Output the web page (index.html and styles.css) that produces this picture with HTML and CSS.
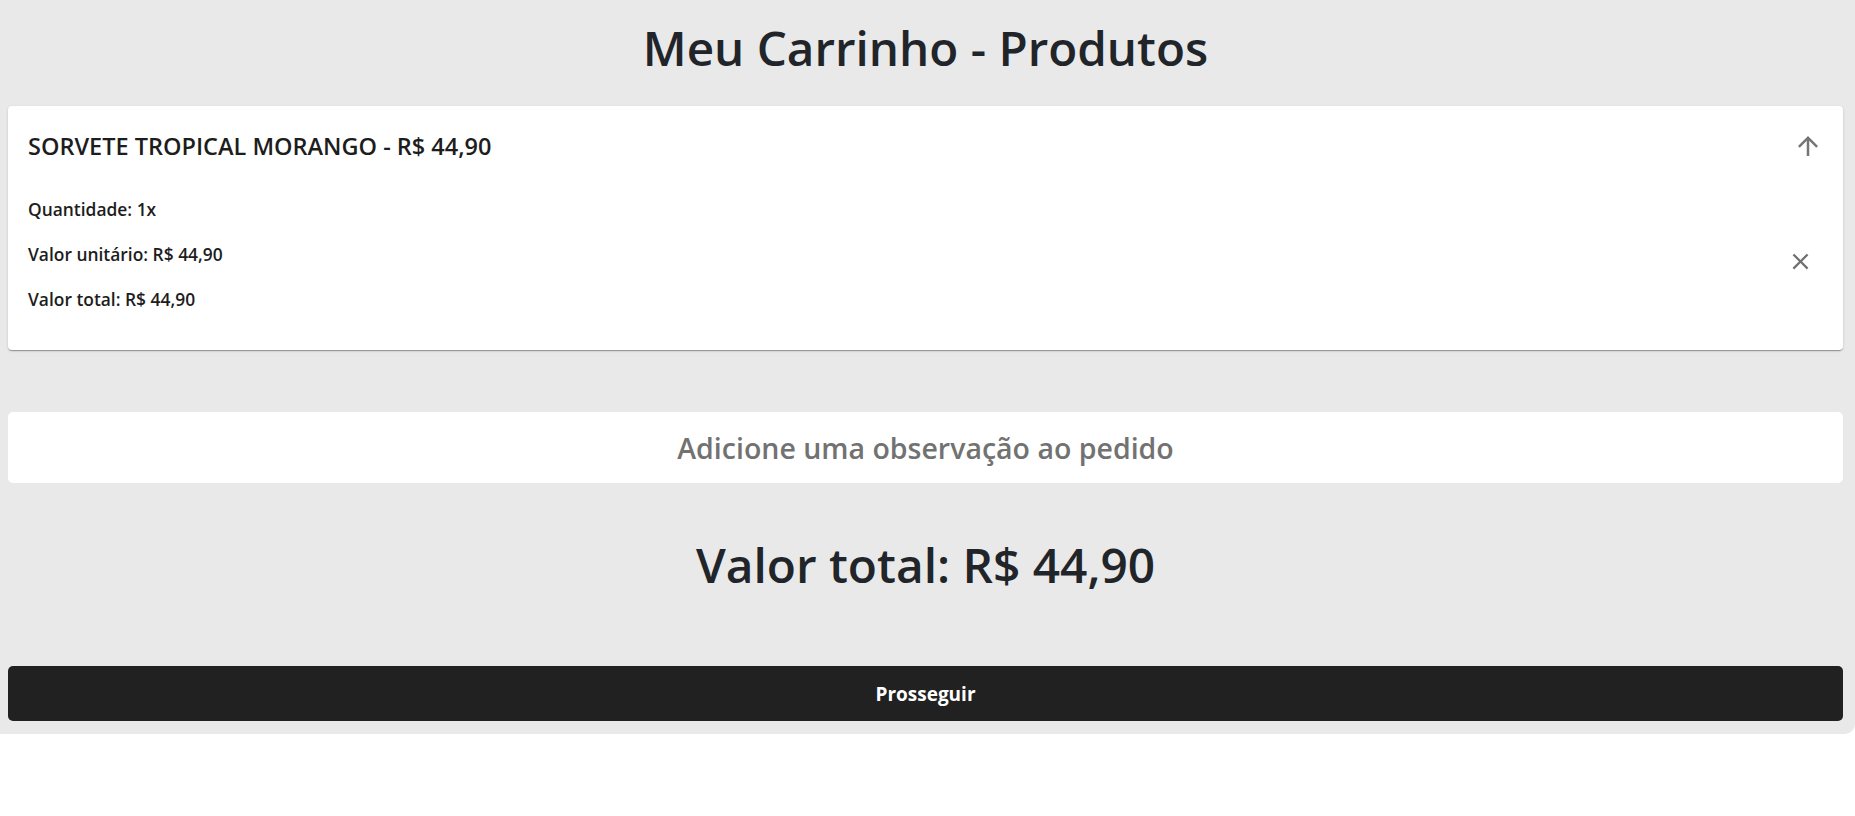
FILE: index.html
```html
<!DOCTYPE html>
<html lang="pt-BR">
<head>
<meta charset="utf-8">
<title>Meu Carrinho - Produtos</title>
<link rel="stylesheet" href="styles.css">
</head>
<body>
<div class="page">
  <h1 class="page-title">Meu Carrinho - Produtos</h1>

  <div class="card">
    <div class="card-header">
      <span class="card-title">SORVETE TROPICAL MORANGO - R$ 44,90</span>
      <svg class="icon-arrow" viewBox="0 0 24 24" width="30" height="30"><path d="M4 12l1.41 1.41L11 7.83V20h2V7.83l5.58 5.59L20 12l-8-8-8 8z"/></svg>
    </div>
    <div class="card-body">
      <div class="details">
        <p class="detail">Quantidade: 1x</p>
        <p class="detail">Valor unitário: R$ 44,90</p>
        <p class="detail">Valor total: R$ 44,90</p>
      </div>
      <svg class="icon-close" viewBox="0 0 24 24" width="27" height="27"><path d="M19 6.41L17.59 5 12 10.59 6.41 5 5 6.41 10.59 12 5 17.59 6.41 19 12 13.41 17.59 19 19 17.59 13.41 12z"/></svg>
    </div>
  </div>

  <input class="obs" type="text" placeholder="Adicione uma observação ao pedido">

  <h2 class="total">Valor total: R$ 44,90</h2>

  <button class="btn">Prosseguir</button>
</div>
</body>
</html>
```
FILE: styles.css
```css
html, body {
  margin: 0;
  padding: 0;
  background: #ffffff;
}
body {
  font-family: "Open Sans", "Noto Sans", sans-serif;
  color: #212529;
}
.page {
  background: #e9e9e9;
  padding: 0 12px 13px 8px;
  border-bottom-right-radius: 10px;
  display: flex;
  flex-direction: column;
}
.page-title {
  margin: 0;
  height: 106px;
  display: flex;
  align-items: center;
  justify-content: center;
  font-size: 47.6px;
  font-weight: 600;
  line-height: 1;
  padding-bottom: 10px;
  box-sizing: border-box;
}
.card {
  background: #fff;
  border-radius: 4px;
  box-shadow: 0px 2px 1px -1px rgba(0,0,0,0.2), 0px 1px 1px 0px rgba(0,0,0,0.14), 0px 1px 3px 0px rgba(0,0,0,0.12);
  height: 244px;
  display: flex;
  flex-direction: column;
}
.card-header {
  height: 80px;
  display: flex;
  align-items: center;
  justify-content: space-between;
  padding: 0 20px 0 20px;
}
.card-title {
  font-size: 23.5px;
  font-weight: 600;
  color: #1d1d1d;
}
.icon-arrow {
  fill: #757575;
}
.card-body {
  flex: 1;
  display: flex;
  align-items: center;
  justify-content: space-between;
  padding: 0 29px 0 20px;
}
.details {
  padding-bottom: 28px;
}
.detail {
  margin: 0;
  height: 45px;
  line-height: 45px;
  font-size: 17.4px;
  font-weight: 600;
  color: #1d1d1d;
}
.icon-close {
  fill: #6f6f6f;
  margin-top: -13px;
}
.obs {
  margin: 62px 0 0 0;
  height: 71px;
  border: none;
  border-radius: 5px;
  background: #fff;
  text-align: center;
  font-family: inherit;
  font-size: 28.5px;
  font-weight: 600;
  color: #333;
  outline: none;
  padding: 0;
}
.obs::placeholder {
  color: #727272;
  opacity: 1;
}
.total {
  margin: 0;
  height: 183px;
  display: flex;
  align-items: center;
  justify-content: center;
  font-size: 47.8px;
  font-weight: 600;
  line-height: 1;
  padding-bottom: 20px;
  box-sizing: border-box;
}
.btn {
  height: 55px;
  border: none;
  border-radius: 5px;
  background: #212121;
  color: #fff;
  font-family: inherit;
  font-size: 19px;
  font-weight: 700;
  cursor: pointer;
}
```
